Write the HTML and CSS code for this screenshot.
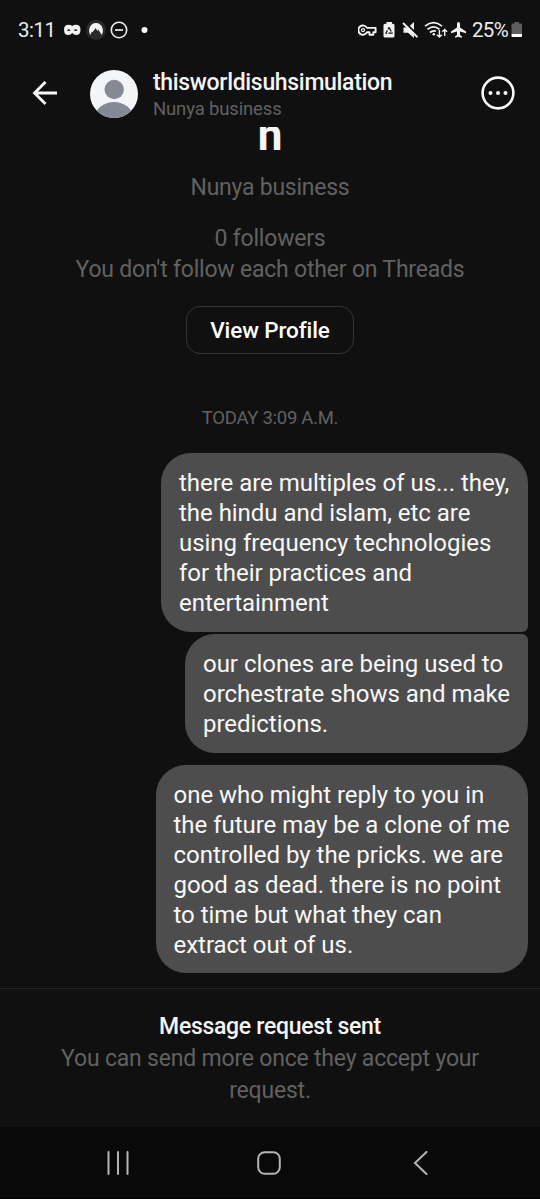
FILE: index.html
```html
<!DOCTYPE html>
<html lang="en">
<head>
<meta charset="utf-8">
<title>Messages</title>
<link rel="stylesheet" href="styles.css">
</head>
<body>
<div class="phone">
  <div class="status">
    <span class="clock">3:11</span>
    <svg class="status-left" width="96" height="24" viewBox="0 0 96 24">
      <path fill="#f2f2f2" fill-rule="evenodd" d="M0 9.500Q0 4.800 4.500 4.800Q7 4.800 8.250 6Q9.500 4.800 12 4.800Q16.500 4.800 16.500 9.500Q16.500 15 12.300 15Q9.800 15 8.250 13Q6.700 15 4.200 15Q0 15 0 9.500ZM3 10.200Q4.500 11.800 6.600 10.300Q4.800 8.300 3 10.200ZM9.900 10.300Q12 11.800 13.500 10.200Q11.700 8.300 9.900 10.300Z"/>
      <circle cx="32" cy="10" r="10" fill="#2a2a2a"/>
      <path fill="#f4f4f4" d="M26.200 15C23.500 10 26 3 32 3C38 3 40.500 10 37.800 15L34.200 9.500L33.300 11L31.800 8L28.500 12.200L28 11.500Z"/>
      <circle cx="55" cy="10" r="7.700" fill="none" stroke="#eee" stroke-width="1.600"/>
      <path d="M51 10H59" stroke="#eee" stroke-width="1.700"/>
      <circle cx="80.500" cy="10" r="3" fill="#fff"/>
    </svg>
    <svg class="status-right" width="114" height="24" viewBox="0 0 114 24">
      <path fill="none" stroke="#f2f2f2" stroke-width="1.900" stroke-linejoin="round" d="M9 7.900A4.600 4.600 0 1 0 9 12.300H11.500V14.800H15.300V12.300H17.600V7.900Z"/>
      <circle cx="5" cy="10.100" r="1.500" fill="none" stroke="#f2f2f2" stroke-width="1.300"/>
      <path fill="#f2f2f2" d="M28.500 2H34V3.800H35Q36.500 3.800 36.500 5.300V16Q36.500 17.500 35 17.500H27Q25.500 17.500 25.500 16V5.300Q25.500 3.800 27 3.800H28.500Z"/>
      <path fill="none" stroke="#151515" stroke-width="1.300" stroke-linejoin="round" stroke-dasharray="4.500 1.300" d="M31 7.600L34.200 13.200H27.800Z"/>
      <path fill="#f2f2f2" d="M45.500 7.500H50L56 2V18L50 12.800H45.500Z"/>
      <path d="M46 1.500L60.500 16" stroke="#101010" stroke-width="2.200"/>
      <path d="M45 3L59.500 17.300" stroke="#f2f2f2" stroke-width="1.900"/>
      <g fill="none" stroke="#f2f2f2" stroke-width="1.700">
        <path d="M67 6.200Q75.500-.8 84 6.200M69.500 9.400Q75.500 4.200 81.500 9.400M72 12.500Q75 9.800 78 11.300"/>
        <path stroke-width="1.400" d="M81.400 10V17M79 14.700L81.400 17L83.800 14.700M86.700 16V9.500M84.300 11.800L86.700 9.500L89.100 11.800"/>
      </g>
      <circle cx="75.800" cy="14.300" r="1.300" fill="#f2f2f2"/>
      <path fill="#f2f2f2" d="M100.500 2Q102 2 102 4V7.500L108 11.500V13.200L102 11.500V15L104 16.500V17.800L100.500 16.800L97 17.800V16.500L99 15V11.500L93 13.200V11.500L99 7.500V4Q99 2 100.500 2Z"/>
    </svg>
    <span class="percent">25%</span>
    <svg class="battery" width="12" height="16" viewBox="0 0 12 16">
      <path fill="#5d5d5d" d="M3.500 0H8V1.500H10Q11 1.500 11 2.500V12.500H.5V2.500Q.5 1.500 1.500 1.500H3.500Z"/>
      <path fill="#fff" d="M.5 12H11V14Q11 15 10 15H1.500Q.5 15 .5 14Z"/>
    </svg>
  </div>

  <header class="header">
    <svg class="back" width="26" height="26" viewBox="0 0 26 26"><path d="M25 13H2.500M13.500 2L2.500 13L13.500 24" fill="none" stroke="#fafafa" stroke-width="2.800"/></svg>
    <svg class="avatar" width="48" height="48" viewBox="0 0 48 48">
      <defs><clipPath id="disc"><circle cx="24" cy="24" r="24"/></clipPath></defs>
      <g clip-path="url(#disc)"><rect width="48" height="48" fill="#f3f5f7"/><circle cx="24.200" cy="19.500" r="9.700" fill="#858996"/><ellipse cx="24" cy="47.500" rx="19" ry="15.500" fill="#858996"/></g>
    </svg>
    <div class="who"><div class="handle">thisworldisuhsimulation</div><div class="name">Nunya business</div></div>
    <svg class="more" width="34" height="34" viewBox="0 0 34 34"><circle cx="17" cy="17" r="15.400" fill="none" stroke="#fafafa" stroke-width="2.600"/><g fill="#fafafa"><circle cx="9.500" cy="17" r="2"/><circle cx="17" cy="17" r="2"/><circle cx="24.500" cy="17" r="2"/></g></svg>
  </header>

  <main class="chat">
    <div class="title">n</div>
    <div class="muted bio">Nunya business</div>
    <div class="muted facts">0 followers<br>You don't follow each other on Threads</div>
    <button class="profile">View Profile</button>
    <div class="date">TODAY 3:09 A.M.</div>
    <div class="bubble first">there are multiples of us... they,<br>the hindu and islam, etc are<br>using frequency technologies<br>for their practices and<br>entertainment</div>
    <div class="bubble second">our clones are being used to<br>orchestrate shows and make<br>predictions.</div>
    <div class="bubble third">one who might reply to you in<br>the future may be a clone of me<br>controlled by the pricks. we are<br>good as dead. there is no point<br>to time but what they can<br>extract out of us.</div>
  </main>

  <footer class="notice"><div class="sent">Message request sent</div><div class="muted more-info">You can send more once they accept your<br>request.</div></footer>

  <nav class="nav">
    <svg width="24" height="24" viewBox="0 0 24 24"><path d="M2.500 1V23M12 1V23M21.500 1V23" stroke="#b5b5b5" stroke-width="2" stroke-linecap="round"/></svg>
    <svg width="24" height="24" viewBox="0 0 24 24"><rect x="1.200" y="1.200" width="21.600" height="21.600" rx="6.500" fill="none" stroke="#b5b5b5" stroke-width="2"/></svg>
    <svg width="24" height="24" viewBox="0 0 24 24"><path d="M18.500 1L7 12L18.500 23" fill="none" stroke="#b5b5b5" stroke-width="2" stroke-linecap="round"/></svg>
  </nav>
</div>
</body>
</html>
```
FILE: styles.css
```css
* { box-sizing: border-box; }
body { margin: 0; background: #101010; font-family: Roboto, "Liberation Sans", sans-serif; color: #f5f5f5; }
.phone { width: 540px; height: 1199px; display: flex; flex-direction: column; overflow: hidden; }
svg { display: block; flex: none; }
.status { height: 60px; flex: none; display: flex; align-items: center; padding: 0 17px 0 18px; white-space: nowrap; }
.clock { width: 46px; font-size: 20.5px; line-height: 24px; color: #ececec; letter-spacing: -.5px; }
.status-left { margin-top: 4px; }
.status-right { margin: 4px 0 0 auto; }
.percent { font-size: 20.5px; width: 38px; letter-spacing: -.7px; color: #ececec; }
.battery { margin-left: 1px; }
.header { height: 67px; flex: none; display: flex; align-items: flex-start; padding: 0 25px 0 32px; white-space: nowrap; }
.back { margin-top: 20px; }
.avatar { margin: 10px 15px 0 32px; }
.who { flex: 1; padding-top: 9px; }
.handle { font-size: 23px; font-weight: 500; line-height: 28px; letter-spacing: -.32px; }
.name { font-size: 18.5px; line-height: 25px; color: #616161; letter-spacing: -.15px; }
.more { margin-top: 16px; }
.chat { flex: none; height: 861px; overflow: hidden; display: flex; flex-direction: column; align-items: center; padding-right: 12px; }
.title { font-size: 44px; font-weight: 700; line-height: 44px; height: 44px; margin: -14px -12px 0 0; }
.muted { color: #616161; font-size: 23px; line-height: 31px; letter-spacing: -.2px; text-align: center; white-space: nowrap; }
.bio { margin: 15px -12px 0 0; letter-spacing: -.25px; }
.facts { margin: 20px -12px 0 0; }
.profile { margin: 21px -12px 0 0; flex: none; width: 168px; height: 48px; border: 1.5px solid #353535; border-radius: 14px; background: transparent; padding: 0; font: 500 22.5px/28px Roboto, sans-serif; letter-spacing: -.1px; color: #fff; }
.date { margin: 52px -12px 0 0; font-size: 18.5px; line-height: 24px; letter-spacing: -.28px; color: #616161; }
.bubble { align-self: flex-end; flex: none; background: #4d4d4d; border-radius: 30px; padding: 14.5px 18px 14px; font-size: 24px; line-height: 30px; letter-spacing: -.03px; white-space: nowrap; color: #f8f8f8; }
.first { width: 367px; height: 178.5px; margin-top: 23px; border-bottom-right-radius: 6px; }
.second { width: 343px; height: 119px; margin-top: 2.5px; border-top-right-radius: 6px; }
.third { width: 372.5px; height: 208px; margin-top: 12px; }
.notice { height: 139px; flex: none; border-top: 1px solid #242424; padding-top: 22px; text-align: center; }
.sent { font-size: 23px; font-weight: 500; line-height: 32px; letter-spacing: -.3px; }
.more-info { line-height: 32px; }
.nav { height: 72px; flex: none; background: #090909; border-bottom: 1px solid #000; display: flex; align-items: center; justify-content: space-between; padding: 0 108px 0 106px; }
```
